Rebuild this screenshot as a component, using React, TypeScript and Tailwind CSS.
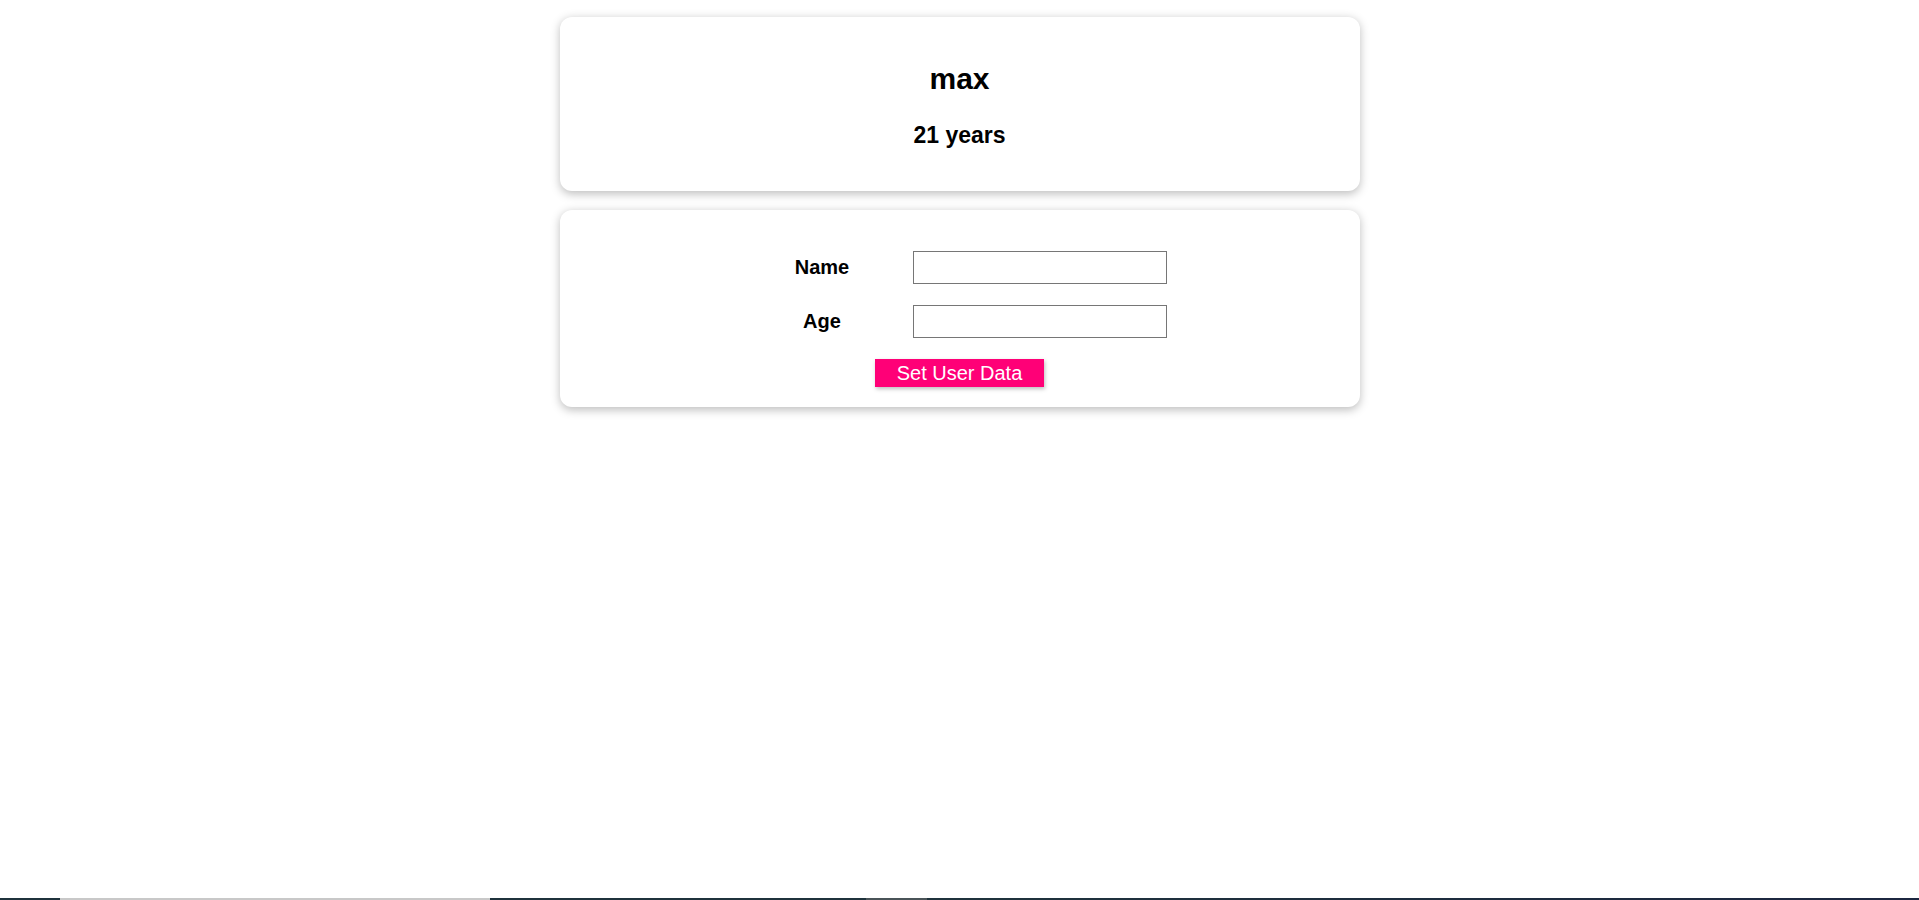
export default function App() {
  return (
    <div className="min-h-[900px] flex flex-col bg-white font-['Liberation_Sans',Arial,sans-serif] text-black">
      <div className="flex-1">
        <section className="mt-[17px] mx-auto w-[800px] p-[20px] rounded-[12px] bg-white text-center [box-shadow:0_2.5px_10px_rgba(0,0,0,0.26)]">
          <h2 className="mt-[25px] mb-[25px] text-[30px] leading-[34.5px] font-bold">max</h2>
          <h3 className="mt-[25px] mb-[23px] text-[23px] leading-[26px] font-bold">21 years</h3>
        </section>

        <section className="mt-[19px] mx-auto w-[800px] p-[20px] rounded-[12px] bg-white [box-shadow:0_2.5px_10px_rgba(0,0,0,0.26)]">
          <div className="flex flex-col items-center gap-[21px] pt-[21px]">
            <div className="flex items-center">
              <label className="w-[139px] text-center text-[20px] font-bold">Name</label>
              <input type="text" className="ml-[21px] w-[254px] h-[33px] border border-[#767676] bg-white outline-none" />
            </div>
            <div className="flex items-center">
              <label className="w-[139px] text-center text-[20px] font-bold">Age</label>
              <input type="text" className="ml-[21px] w-[254px] h-[33px] border border-[#767676] bg-white outline-none" />
            </div>
            <button className="w-[169px] h-[28px] bg-[#ff0077] text-white text-[20px] leading-[28px] [box-shadow:1px_2px_4px_rgba(0,0,0,0.26)]">
              Set User Data
            </button>
          </div>
        </section>
      </div>

      <div className="h-[2px] flex">
        <div className="w-[60px] bg-[#1f333c]" />
        <div className="w-[430px] bg-[#c8c8c8]" />
        <div className="w-[376px] bg-[#1f333c]" />
        <div className="w-[61px] bg-[#4a5458]" />
        <div className="flex-1 bg-gradient-to-r from-[#1f333c] to-[#1c2640]" />
      </div>
    </div>
  );
}
